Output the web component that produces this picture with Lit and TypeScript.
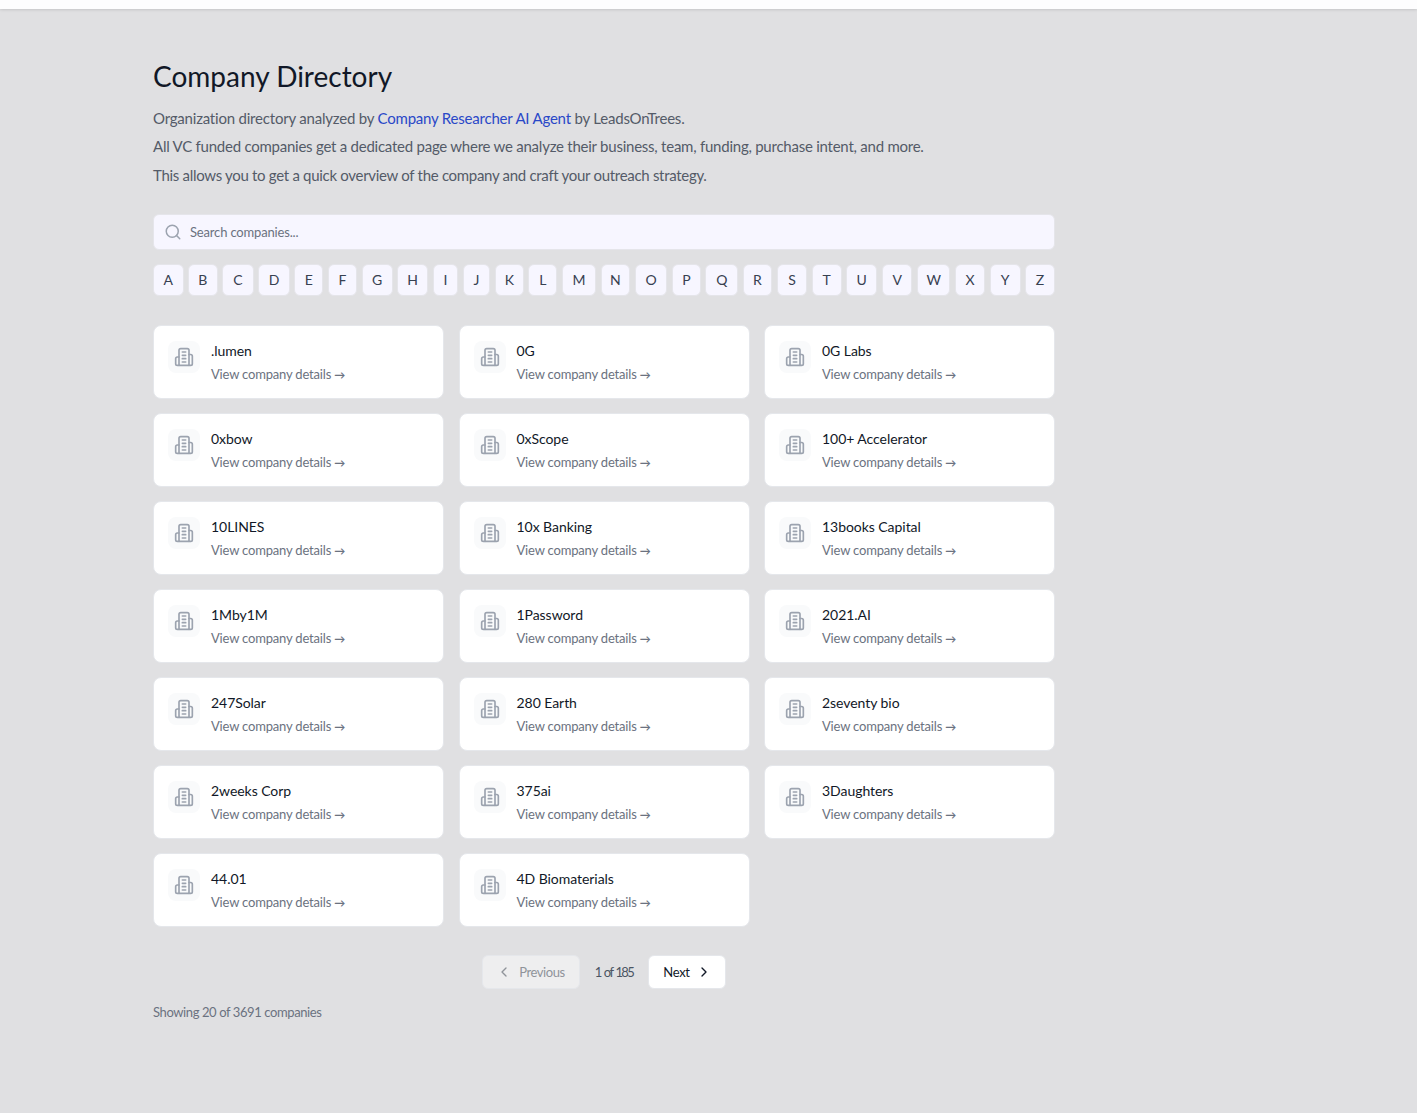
import { LitElement, html, css, svg } from "lit";
import { customElement } from "lit/decorators.js";

const NAMES = [".lumen","0G","0G Labs","0xbow","0xScope","100+ Accelerator","10LINES","10x Banking","13books Capital","1Mby1M","1Password","2021.AI","247Solar","280 Earth","2seventy bio","2weeks Corp","375ai","3Daughters","44.01","4D Biomaterials"];
const LETTERS: [string, number][] = [["A",30.5],["B",29.5],["C",31.8],["D",31.2],["E",29.3],["F",29],["G",31],["H",31],["I",25.5],["J",27.5],["K",29.2],["L",28.8],["M",34.2],["N",29.8],["O",32.5],["P",28.8],["Q",32.9],["R",29.5],["S",30.5],["T",29.8],["U",31.2],["V",30.5],["W",33.5],["X",30.1],["Y",30.9],["Z",29.8]];

const building = svg`<path d="M6 22V4a2 2 0 0 1 2-2h8a2 2 0 0 1 2 2v18Z"/><path d="M6 12H4a2 2 0 0 0-2 2v6a2 2 0 0 0 2 2h2"/><path d="M18 9h2a2 2 0 0 1 2 2v9a2 2 0 0 1-2 2h-2"/><path d="M10 6h4"/><path d="M10 10h4"/><path d="M10 14h4"/><path d="M10 18h4"/>`;

@customElement("app-root")
export class AppRoot extends LitElement {
  static styles = css`
    :host { display: block; min-height: 1113px; background: #e0e0e2; font-family: "Lato", "Noto Sans", sans-serif; color: #111827; }
    * { box-sizing: border-box; }
    .topbar { height: 9px; background: #fdfdfe; box-shadow: 0 1px 3px rgba(0,0,0,.12); }
    .wrap { width: 902px; margin-left: 153px; padding-top: 49px; }
    h1 { margin: 0; font-size: 28px; line-height: 36px; font-weight: 400; color: #111827; letter-spacing: 0; }
    p { margin: 0; font-size: 15px; line-height: 22px; color: #545b68; letter-spacing: -.24px; }
    .intro { padding-top: 13px; display: flex; flex-direction: column; gap: 6px; }
    .intro p:nth-child(1) { letter-spacing: -.205px; }
    .intro p:nth-child(3) { margin-top: 1px; letter-spacing: -.3px; }
    a { color: #2a48c8; text-decoration: none; }
    .search { margin-top: 28px; height: 36px; display: flex; align-items: center; gap: 8px; padding-left: 10px; background: #f7f6ff; border: 1px solid #e5e5ea; border-radius: 6px; font-size: 13px; color: #6b7280; letter-spacing: -.17px; }
    .search svg { width: 18px; height: 18px; fill: none; stroke: #9ca3af; stroke-width: 2; stroke-linecap: round; stroke-linejoin: round; }
    .letters { margin-top: 14px; display: flex; justify-content: space-between; }
    .letter { height: 32px; padding-bottom: 1px; display: flex; align-items: center; justify-content: center; background: #f7f6ff; border: 1px solid #e5e5ea; border-radius: 6px; font-size: 14px; color: #374151; }
    .grid { margin-top: 29px; display: grid; grid-template-columns: repeat(3, 291px); gap: 14px 14.5px; }
    .card { height: 74px; display: flex; align-items: flex-start; gap: 11px; padding: 15px 14px; background: #fff; border: 1px solid #e5e7eb; border-radius: 8px; }
    .ico { width: 32px; height: 32px; flex: none; border-radius: 8px; background: #f9fafb; display: flex; align-items: center; justify-content: center; }
    .ico svg { width: 20px; height: 20px; fill: none; stroke: #9ca3af; stroke-width: 2; stroke-linecap: round; stroke-linejoin: round; }
    .txt { display: flex; flex-direction: column; margin-top: -1px; }
    .name { font-size: 14px; line-height: 22px; color: #111827; letter-spacing: -.05px; }
    .sub { margin-top: 2px; font-size: 13px; line-height: 20px; color: #6b7280; letter-spacing: -.18px; }
    .arrow { font-size: 11px; font-weight: 700; letter-spacing: 0; }
    .pager { margin-top: 28px; display: flex; justify-content: center; align-items: center; gap: 15px; font-size: 13px; letter-spacing: -.3px; }
    .btn { height: 34px; display: flex; align-items: center; gap: 6px; padding: 0 13px 0 14px; border: 1px solid #e5e7eb; border-radius: 6px; background: #fff; color: #111827; }
    .btn svg { width: 16px; height: 16px; fill: none; stroke: currentColor; stroke-width: 2; stroke-linecap: round; stroke-linejoin: round; }
    .btn.off { gap: 7px; padding: 0 14px 0 13px; background: #eeeeef; color: #8f939a; letter-spacing: -.45px; }
    .count { color: #4b5563; letter-spacing: -1.6px; word-spacing: 1.5px; }
    .foot { margin-top: 13px; font-size: 13px; line-height: 20px; color: #6b7280; letter-spacing: -.4px; }
  `;

  render() {
    return html`
      <div class="topbar"></div>
      <main class="wrap">
        <h1>Company Directory</h1>
        <div class="intro">
          <p>Organization directory analyzed by <a>Company Researcher AI Agent</a> by LeadsOnTrees.</p>
          <p>All VC funded companies get a dedicated page where we analyze their business, team, funding, purchase intent, and more.</p>
          <p>This allows you to get a quick overview of the company and craft your outreach strategy.</p>
        </div>
        <div class="search">
          <svg viewBox="0 0 24 24"><circle cx="11" cy="11" r="8"/><path d="m21 21-4.3-4.3"/></svg>
          <span>Search companies...</span>
        </div>
        <div class="letters">
          ${LETTERS.map(([l, w]) => html`<div class="letter" style="width:${w}px">${l}</div>`)}
        </div>
        <div class="grid">
          ${NAMES.map(n => html`
            <div class="card">
              <div class="ico"><svg viewBox="0 0 24 24">${building}</svg></div>
              <div class="txt">
                <div class="name">${n}</div>
                <div class="sub">View company details <span class="arrow">→</span></div>
              </div>
            </div>`)}
        </div>
        <div class="pager">
          <div class="btn off"><svg viewBox="0 0 24 24"><path d="m15 18-6-6 6-6"/></svg>Previous</div>
          <span class="count">1 of 185</span>
          <div class="btn">Next<svg viewBox="0 0 24 24"><path d="m9 18 6-6-6-6"/></svg></div>
        </div>
        <div class="foot">Showing 20 of 3691 companies</div>
      </main>
    `;
  }
}
